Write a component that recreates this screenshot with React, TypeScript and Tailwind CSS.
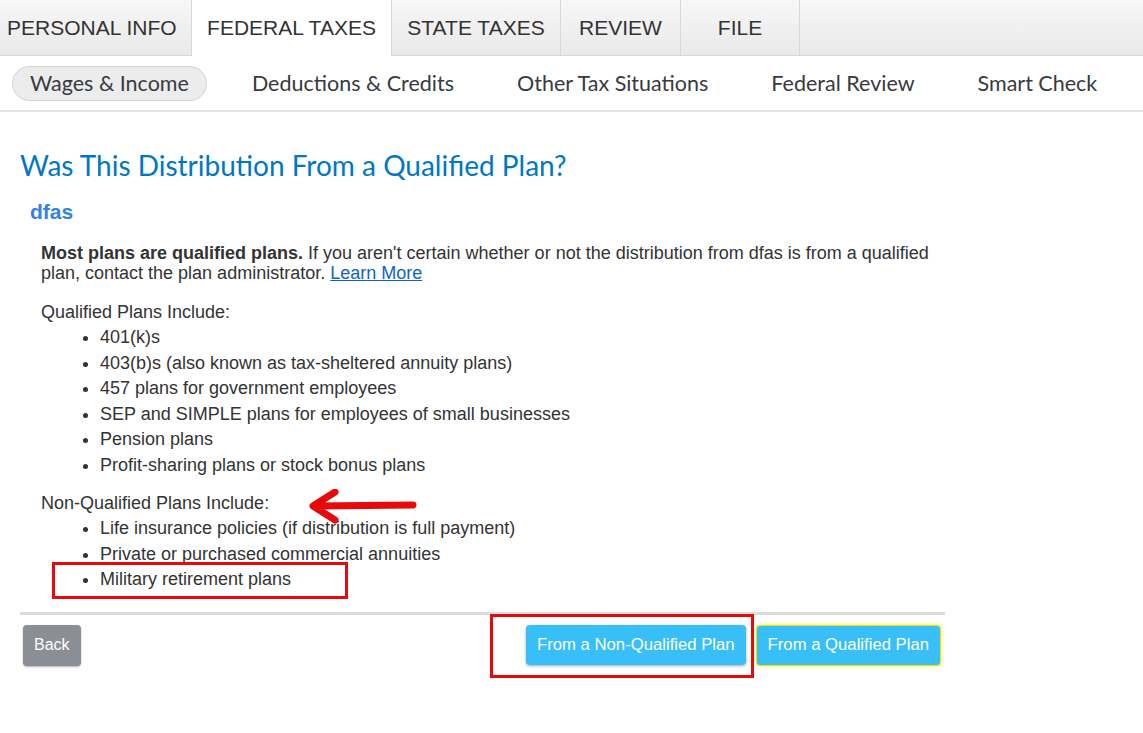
import React from "react";

const topTabs = [
  { label: "PERSONAL INFO", w: "w-[192px] justify-start pl-[7px]", active: false },
  { label: "FEDERAL TAXES", w: "w-[200px] justify-center", active: true },
  { label: "STATE TAXES", w: "w-[169px] justify-center", active: false },
  { label: "REVIEW", w: "w-[120px] justify-center", active: false },
  { label: "FILE", w: "w-[119px] justify-center", active: false },
];

const subNav = [
  "Wages & Income",
  "Deductions & Credits",
  "Other Tax Situations",
  "Federal Review",
  "Smart Check",
];

const qualified = [
  "401(k)s",
  "403(b)s (also known as tax-sheltered annuity plans)",
  "457 plans for government employees",
  "SEP and SIMPLE plans for employees of small businesses",
  "Pension plans",
  "Profit-sharing plans or stock bonus plans",
];

const nonQualified = [
  "Life insurance policies (if distribution is full payment)",
  "Private or purchased commercial annuities",
  "Military retirement plans",
];

function BulletList({ items }: { items: string[] }) {
  return (
    <ul className="list-disc pl-[59px] mt-[3px]">
      {items.map((it) => (
        <li key={it} className="leading-[25.5px]">
          {it}
        </li>
      ))}
    </ul>
  );
}

export default function App() {
  return (
    <div className="min-h-screen bg-white font-['Liberation_Sans',Arial,sans-serif] text-[#333]">
      {/* top tabs */}
      <div className="flex h-[56px] bg-gradient-to-b from-[#f7f7f7] to-[#e9e9e9] border-b border-[#d6d6d6]">
        {topTabs.map((t) => (
          <div
            key={t.label}
            className={`${t.w} flex items-center text-[21px] border-r border-[#d8d8d8] ${
              t.active ? "bg-white h-[56px]" : ""
            }`}
          >
            {t.label}
          </div>
        ))}
      </div>

      {/* sub navigation */}
      <div className="flex items-center h-[56px] border-b-2 border-[#e4e4e4] pl-[12px] gap-[27px] font-['Lato',sans-serif] text-[21.5px] text-[#393a3d]">
        {subNav.map((s, i) => (
          <div
            key={s}
            className={`h-[35px] flex items-center px-[17px] rounded-full ${
              i === 0 ? "bg-[#ececec] border border-[#d3d3d3]" : "border border-transparent"
            }`}
          >
            {s}
          </div>
        ))}
      </div>

      <div className="pl-[20px] w-[945px]">
        <h1 className="mt-[38px] font-['Lato',sans-serif] text-[28px] text-[#0077c5] leading-[30px]">
          Was This Distribution From a Qualified Plan?
        </h1>
        <h2 className="mt-[20px] ml-[10px] font-bold text-[21px] text-[#3382e0] leading-[24px]">
          dfas
        </h2>

        <div className="pl-[21px] mt-[19px] text-[18px]">
          <p className="leading-[20px]">
            <b>Most plans are qualified plans.</b> If you aren't certain whether or not the
            distribution from dfas is from a qualified plan, contact the plan administrator.{" "}
            <a className="text-[#0d64c8] underline">Learn More</a>
          </p>

          <p className="mt-[19px] leading-[20px]">Qualified Plans Include:</p>
          <BulletList items={qualified} />

          <div className="relative">
            <p className="mt-[15px] leading-[20px]">Non-Qualified Plans Include:</p>
            <svg
              className="absolute left-[264px] top-[-4px]"
              width="115"
              height="36"
              viewBox="0 0 115 36"
            >
              <path
                d="M108 16 L10 17 M30 3 L8 17 L30 31"
                stroke="#e60a0a"
                strokeWidth="7"
                strokeLinecap="round"
                strokeLinejoin="round"
                fill="none"
              />
            </svg>
          </div>
          <div className="relative">
            <BulletList items={nonQualified} />
            <div className="absolute left-[11px] top-[46px] w-[296px] h-[37px] border-[3px] border-[#e60a0a]" />
          </div>
        </div>

        <div className="mt-[19px] h-[3px] bg-[#dcdcdc]" />

        <div className="flex items-start mt-[10px] pl-[3px] relative">
          <button className="h-[41px] px-[11px] rounded-[4px] bg-[#8b8e95] text-white text-[16px] shadow-[0_1px_2px_rgba(0,0,0,0.3)]">
            Back
          </button>
          <div className="ml-auto flex gap-[10px] pr-[4px]">
            <button className="h-[40px] px-[11px] rounded-[4px] bg-[#38bff8] text-white text-[16.7px] shadow-[0_1px_3px_rgba(0,0,0,0.35)]">
              From a Non-Qualified Plan
            </button>
            <button className="h-[41px] px-[11px] rounded-[4px] bg-[#38bff8] text-white text-[16.7px] border border-[#f5e200] shadow-[0_0_4px_#f5e94a]">
              From a Qualified Plan
            </button>
          </div>
          <div className="absolute left-[470px] top-[-11px] w-[264px] h-[64px] border-[3px] border-[#e60a0a]" />
        </div>
      </div>
    </div>
  );
}
